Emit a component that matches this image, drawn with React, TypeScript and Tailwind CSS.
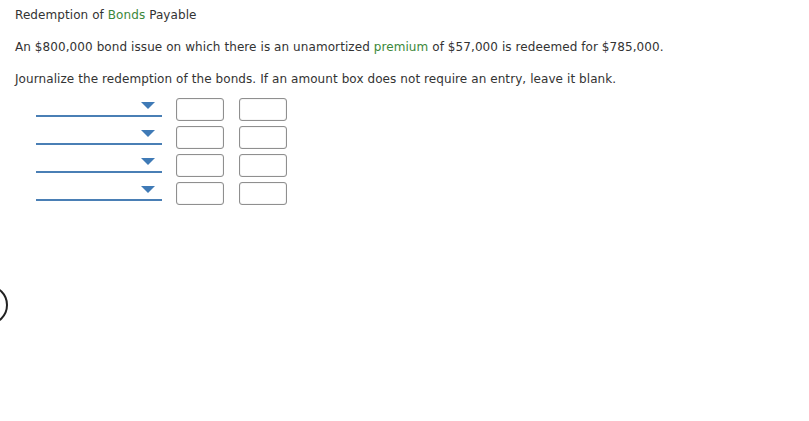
const rows = [0, 1, 2, 3];

const JournalRow = () => {
  return (
    <div className="flex items-start h-[28px]">
      <div className="ml-[36px] w-[126px] h-[19px] border-b-2 border-[#4a7fb5] flex justify-end pr-[7px] pt-[4px]">
        <svg width="14" height="7" viewBox="0 0 14 7">
          <polygon points="0,0 14,0 7,7" fill="#3f7ab6" />
        </svg>
      </div>
      <div className="ml-[14px] w-[48px] h-[23px] rounded-[3px] border border-[#8f8f8f] bg-white shadow-[inset_0_0_1px_rgba(0,0,0,0.35)]" />
      <div className="ml-[15px] w-[48px] h-[23px] rounded-[3px] border border-[#8f8f8f] bg-white shadow-[inset_0_0_1px_rgba(0,0,0,0.35)]" />
    </div>
  );
};

const App = () => {
  return (
    <div className="relative w-[809px] h-[421px] overflow-hidden bg-white text-[#333] text-[12px] tracking-[0.08px] font-['DejaVu_Sans',Verdana,sans-serif]">
      <div className="pl-[15px] pt-[7px]">
        <p className="leading-[16px]">
          Redemption of <span className="text-[#3b883b]">Bonds</span> Payable
        </p>
        <p className="mt-[16px] leading-[16px]">
          An $800,000 bond issue on which there is an unamortized{' '}
          <span className="text-[#3b883b]">premium</span> of $57,000 is redeemed for $785,000.
        </p>
        <p className="mt-[16px] leading-[16px]">
          Journalize the redemption of the bonds. If an amount box does not require an entry, leave it blank.
        </p>
      </div>
      <div className="mt-[11px] flex flex-col">
        {rows.map((r) => (
          <JournalRow key={r} />
        ))}
      </div>
      <svg className="absolute left-0 top-[283px]" width="12" height="44" viewBox="0 0 12 44">
        <circle cx="-12" cy="22" r="19" fill="none" stroke="#222" strokeWidth="2" />
      </svg>
    </div>
  );
};

export default App;
